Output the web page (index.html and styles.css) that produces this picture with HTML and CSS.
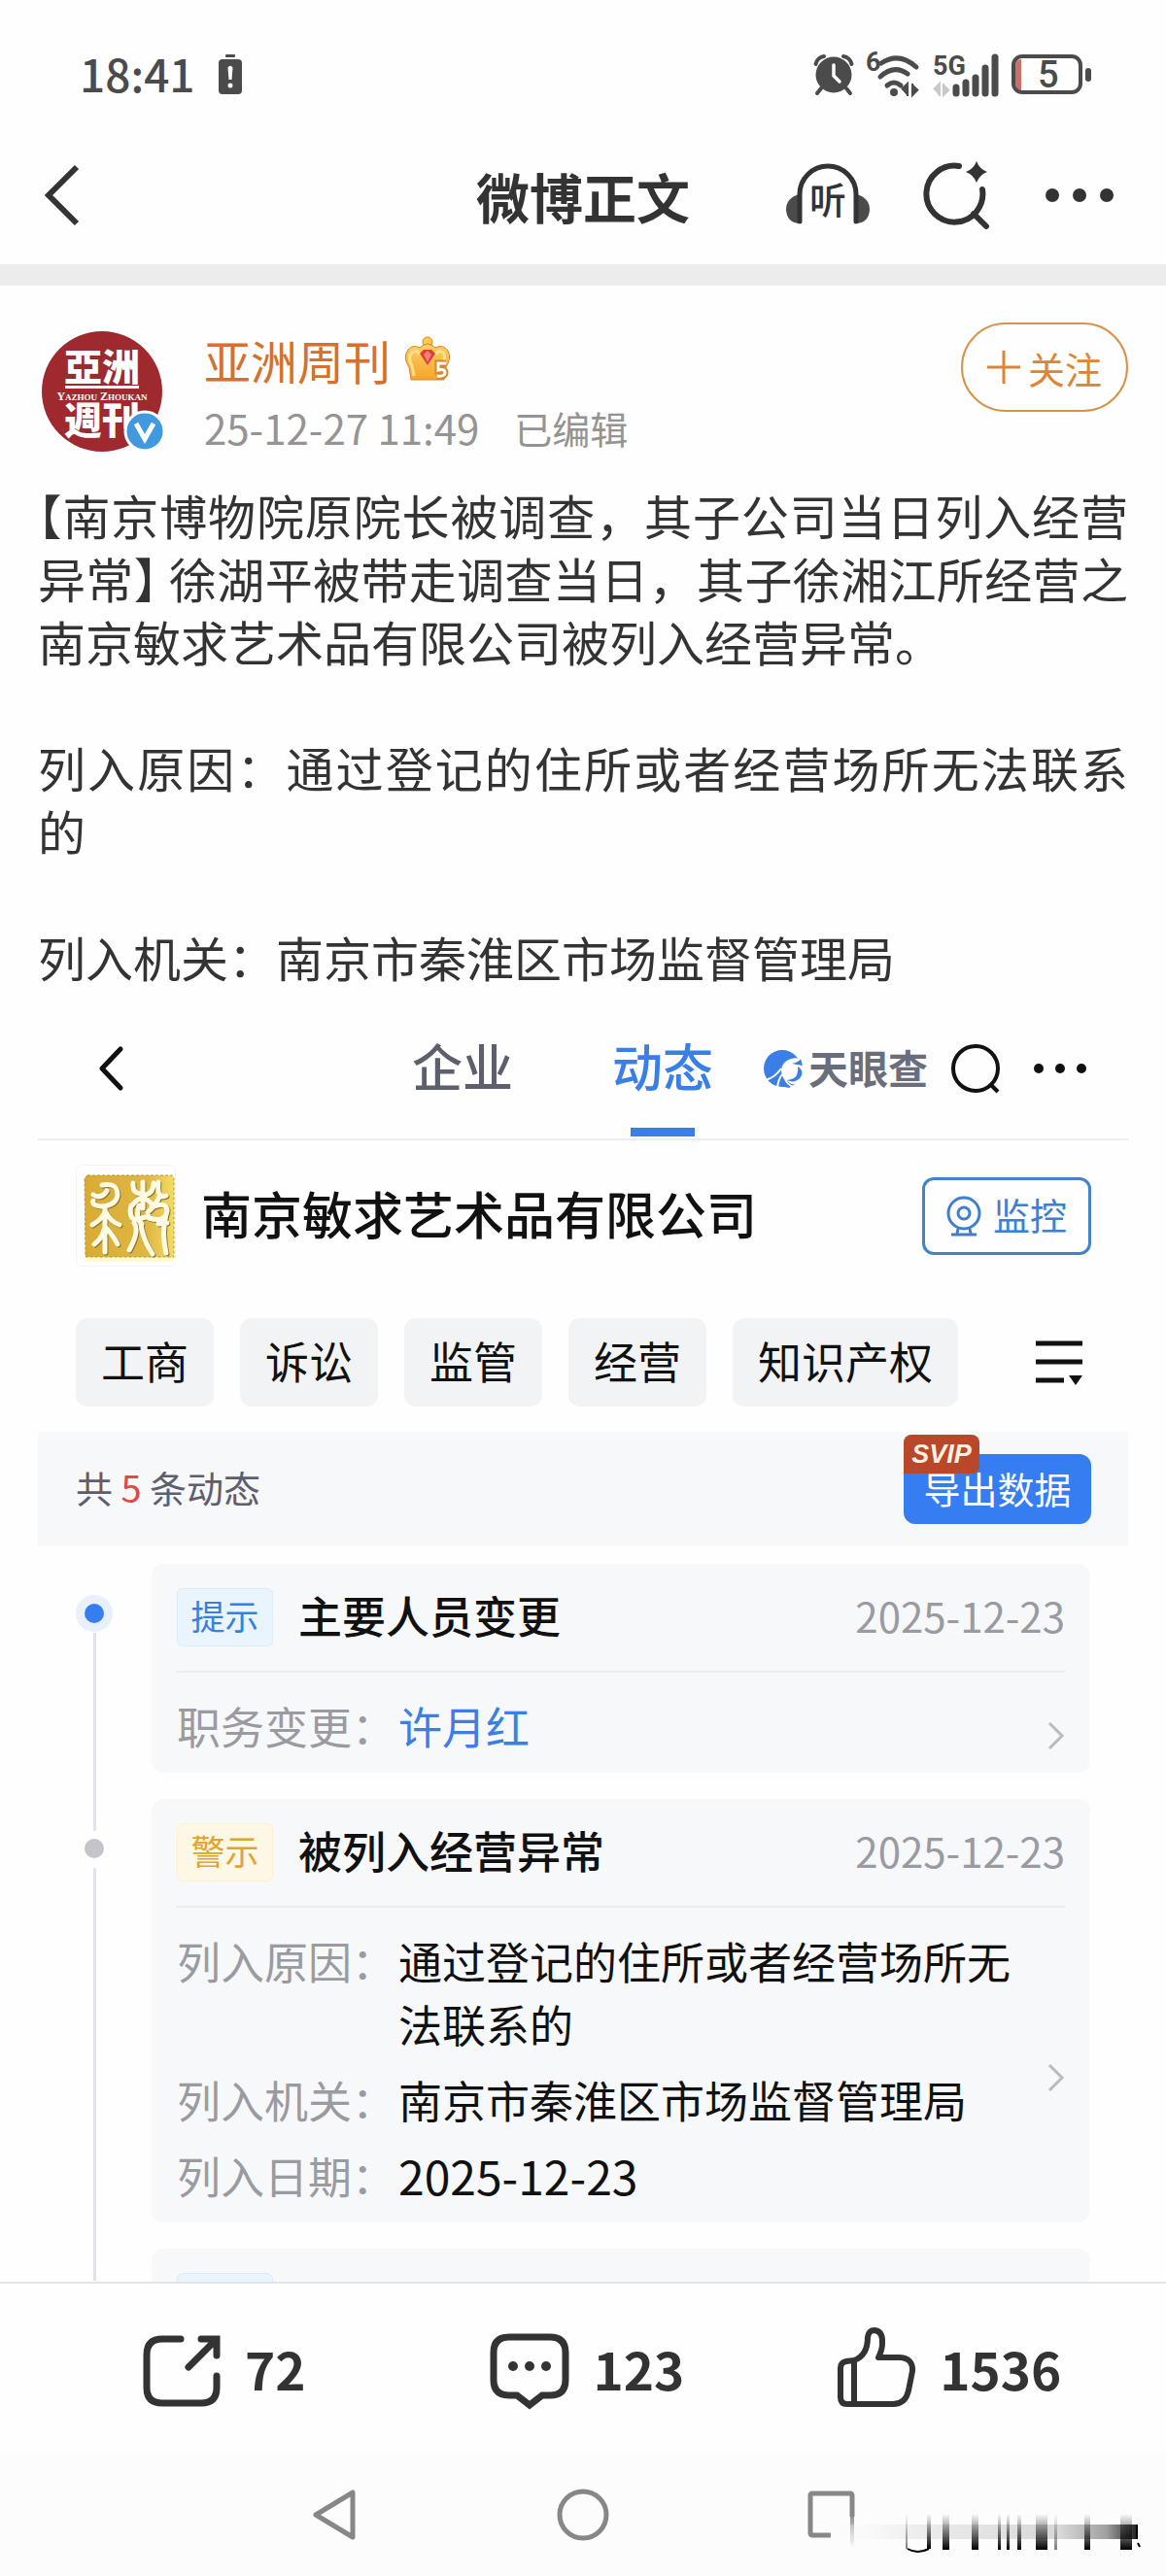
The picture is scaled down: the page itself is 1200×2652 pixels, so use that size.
FILE: index.html
```html
<!DOCTYPE html>
<html lang="zh-CN">
<head>
  <meta charset="UTF-8">
  <meta name="viewport" content="width=device-width, initial-scale=1.0">
  <title>微博正文</title>
  <link rel="stylesheet" href="styles.css">
</head>
<body>
  <!-- 系统状态栏 -->
  <div class="status-bar">
    <span class="time">18:41</span>
    <svg width="24" height="42" viewBox="0 0 24 42">
      <rect x="7" y="0" width="10" height="3" rx="1" fill="#4b4b4b"/>
      <rect x="0" y="5" width="24" height="36" rx="4" fill="#4b4b4b"/>
      <path d="M9.500 13.500Q12 10 14.500 13.500L13.500 26H10.500Z" fill="#fff"/>
      <circle cx="12" cy="32" r="2.500" fill="#fff"/>
    </svg>

    <div class="status-icons">
      <svg width="40" height="42" viewBox="0 0 40 42">
        <circle cx="20" cy="21" r="18.500" fill="#4b4b4b"/>
        <path d="M1.500 10A10 10 0 0 1 10 2M30 2A10 10 0 0 1 38.500 10M7 35l-4 5M33 35l4 5" fill="none" stroke="#4b4b4b" stroke-width="4" stroke-linecap="round"/>
        <path d="M20 11v11l6 6" fill="none" stroke="#fff" stroke-width="3.500" stroke-linecap="round"/>
      </svg>
      <svg width="56" height="46" viewBox="0 0 56 46">
        <text x="0" y="19" class="svg-small">6</text>
        <path d="M16 11Q34-1 52 15M15 25Q29 12 43 22M22 34Q29 28 36 34" fill="none" stroke="#4b4b4b" stroke-width="5" stroke-linecap="round"/>
        <circle cx="29" cy="41" r="4" fill="#4b4b4b"/>
        <path d="M37 38l6-6v13M54 38l-6 6V32" fill="#4b4b4b" stroke="#4b4b4b" stroke-width="2"/>
      </svg>
      <svg width="68" height="46" viewBox="0 0 68 46">
        <text x="0" y="23" class="svg-small">5G</text>
        <path d="M1 38l6-6v13M17 38l-6 6V32" fill="#c8c8c8" stroke="#c8c8c8" stroke-width="2"/>
        <path d="M24 36v6M34 31v11M44 26v16M54 16v26M64 5v37" stroke="#4b4b4b" stroke-width="7" stroke-linecap="round"/>
      </svg>
      <svg width="82" height="42" viewBox="0 0 82 42">
        <path d="M4 12q0-7 6-7v32q-6 0-6-7z" fill="#c9706a"/>
        <rect x="2" y="2" width="69" height="37" rx="9" fill="none" stroke="#4b4b4b" stroke-width="4"/>
        <rect x="76" y="14" width="6" height="14" rx="3" fill="#4b4b4b"/>
        <text x="27" y="34" class="svg-charge">5</text>
      </svg>
    </div>
  </div>

  <!-- 标题栏 -->
  <header class="app-header">
    <button class="icon-btn" type="button" aria-label="返回">
      <svg width="36" height="64" viewBox="0 0 36 64"><path d="M33 3L4 32l29 29" fill="none" stroke="#333" stroke-width="6"/></svg>
    </button>
    <h1>微博正文</h1>
    <div class="header-actions">
      <button class="icon-btn" type="button" aria-label="听">
        <svg width="88" height="70" viewBox="0 0 88 70">
          <path d="M14 34Q1 38 1 50Q2 63 14 64ZM74 34Q87 38 87 50Q86 63 74 64Z" fill="#4b4b4b"/>
          <path d="M15 62V34a29 29 0 0 1 58 0v28" fill="none" stroke="#333" stroke-width="5" stroke-linecap="round"/>
          <text x="25" y="54" class="svg-listen">听</text>
        </svg>
      </button>
      <button class="icon-btn" type="button" aria-label="搜索">
        <svg width="68" height="70" viewBox="0 0 68 70">
          <path d="M35 5A29 29 0 1 0 59 29M50 54l13 13" fill="none" stroke="#333" stroke-width="6" stroke-linecap="round"/>
          <path d="M53 0q3 8 11 11q-8 3-11 11q-3-8-11-11q8-3 11-11z" fill="#333"/>
        </svg>
      </button>
      <button class="icon-btn" type="button" aria-label="更多">
        <svg width="70" height="14" viewBox="0 0 70 14" fill="#333"><circle cx="7" cy="7" r="7"/><circle cx="35" cy="7" r="7"/><circle cx="63" cy="7" r="7"/></svg>
      </button>
    </div>
  </header>

  <!-- 微博内容 -->
  <main class="post">
    <div class="author">
      <a class="avatar" href="#" aria-label="亚洲周刊">
        <svg width="124" height="124" viewBox="0 0 124 124">
          <circle cx="62" cy="62" r="62" fill="#9e2a2f"/>
          <text x="62" y="51" class="logo-zh">亞洲</text>
          <rect x="24" y="56" width="76" height="3" fill="#fff"/>
          <text x="62" y="71" class="logo-en">Y<tspan class="sc">AZHOU</tspan> Z<tspan class="sc">HOUKAN</tspan></text>
          <text x="62" y="106" class="logo-zh">週刊</text>
        </svg>
        <svg class="verified" width="42" height="42" viewBox="0 0 42 42">
          <circle cx="21" cy="21" r="20" fill="#4299dd" stroke="#fff" stroke-width="3"/>
          <path d="M12 13l9 16 9-16" fill="none" stroke="#fff" stroke-width="5"/>
        </svg>
      </a>
      <div class="author-info">
        <div class="name-row">
          <a class="name" href="#">亚洲周刊</a>
          <svg width="48" height="48" viewBox="0 0 48 48">
            <defs>
              <linearGradient id="gold" x1="0" y1="0" x2="0" y2="1"><stop offset="0" stop-color="#fcd163"/><stop offset="1" stop-color="#f7a42a"/></linearGradient>
            </defs>
            <circle cx="24" cy="6" r="5" fill="#fcc955" stroke="#e08a20"/>
            <path d="M7 45L5 32Q-2 22 4 14Q9 8 16 12Q24 4 32 12Q40 8 45 15Q49 23 43 32L41 45Z" fill="url(#gold)" stroke="#d8862b"/>
            <path d="M10 41l-2-10Q3 22 8 17Q13 13 16 19M38 30Q44 22 40 17Q36 13 32 19" fill="none" stroke="#fde08c" stroke-width="3"/>
            <path d="M16 18l4-4h8l4 4-8 12z" fill="#dc4138"/>
            <path d="M20 19l4-4 4 4-4 8z" fill="#f08176"/>
            <path d="M43 28h-8v7q7-2 7 3q-1 4-8 3" fill="none" stroke="#d8862b" stroke-width="7"/>
            <path d="M43 28h-8v7q7-2 7 3q-1 4-8 3" fill="none" stroke="#fff" stroke-width="3"/>
          </svg>
        </div>
        <div class="meta"><time>25-12-27 11:49</time><span>已编辑</span></div>
      </div>
      <button class="follow" type="button">
        <svg width="34" height="34" viewBox="0 0 34 34"><path d="M0 17h34M17 0v34" stroke="#dd8534" stroke-width="3"/></svg>
        关注
      </button>
    </div>

    <div class="text">
      <p><span class="half">【</span>南京博物院原院长被调查，其子公司当日列入经营异常<span class="half">】</span> 徐湖平被带走调查当日，其子徐湘江所经营之南京敏求艺术品有限公司被列入经营异常。</p>
      <p>列入原因：通过登记的住所或者经营场所无法联系的</p>
      <p>列入机关：南京市秦淮区市场监督管理局</p>
    </div>

    <!-- 天眼查 -->
    <section class="company-page">
      <nav class="tabs">
        <button class="icon-btn" type="button" aria-label="返回">
          <svg width="26" height="46" viewBox="0 0 26 46"><path d="M22 3L3 23l19 20" fill="none" stroke="#111" stroke-width="5" stroke-linecap="round" stroke-linejoin="round"/></svg>
        </button>
        <a class="tab" href="#">企业</a>
        <a class="tab active" href="#">动态</a>
        <div class="brand">
          <svg width="40" height="40" viewBox="0 0 40 40">
            <circle cx="19" cy="20" r="19" fill="#3a7fe6"/>
            <path d="M40 11Q34 8 28 10Q19 13 18 21Q18 31 26 35Q30 40 38 36L42 22Z" fill="#fff"/>
            <path d="M29 15Q37 13 38 10L40 17Q34 16 29 15ZM35 18Q42 22 38 29Q32 36 24 32Q32 31 34 27Q36 22 35 18Z" fill="#3a7fe6"/>
            <path d="M24 32Q27 37 32 36L26 40L17 38Z" fill="#3a7fe6"/>
            <path d="M18 20Q12 29 2 32M19 26Q15 31 14 40M22 31Q24 36 30 39" fill="none" stroke="#fff" stroke-width="2"/>
          </svg>
          <span>天眼查</span>
        </div>
        <button class="icon-btn" type="button" aria-label="搜索">
          <svg width="50" height="50" viewBox="0 0 50 50"><circle cx="25" cy="25" r="23" fill="none" stroke="#111" stroke-width="4"/><path d="M40 41l8 8" stroke="#111" stroke-width="4"/></svg>
        </button>
        <button class="icon-btn" type="button" aria-label="更多">
          <svg width="54" height="10" viewBox="0 0 54 10" fill="#111"><circle cx="5" cy="5" r="5"/><circle cx="27" cy="5" r="5"/><circle cx="49" cy="5" r="5"/></svg>
        </button>
      </nav>

      <div class="company">
        <svg width="103" height="105" viewBox="0 0 103 105">
          <defs>
            <linearGradient id="seal" x1="0" y1="0" x2="1" y2="0"><stop offset="0" stop-color="#d9ab32"/><stop offset="0.700" stop-color="#dfb744"/><stop offset="1" stop-color="#f3dc62"/></linearGradient>
            <path id="strokes" d="M27 21Q43 18 43 31Q42 42 26 43Q16 42 18 37M18 31Q26 36 32 27M30 44V90M30 49Q26 57 17 62M31 49Q36 59 45 62M29 67Q27 76 19 82M31 65Q38 72 43 82M59 19Q58 29 66 30M69 18V45M80 19Q80 29 72 31M58 42Q69 27 80 43M57 42Q54 55 62 57L75 53M65 42Q61 56 68 61M60 60Q66 68 55 88M67 60Q68 75 79 92M85 18Q83 36 93 32M87 31Q82 43 74 49M78 44Q94 37 94 48Q92 60 75 55M93 51Q88 69 93 91M85 61L94 60"/>
          </defs>
          <rect x="0.500" y="0.500" width="102" height="104" rx="6" fill="#fff" stroke="#f3f3f3"/>
          <path d="M8 95h93v5H10z" fill="#fffbd0"/>
          <path d="M12 11H99l2 3V95H10L9 14Z" fill="url(#seal)" stroke="#b99735" stroke-dasharray="3 2"/>
          <g fill="none" stroke-linecap="round">
            <use href="#strokes" x="1" y="1" stroke="#8c7430" stroke-width="5"/>
            <use href="#strokes" stroke="#fffbe3" stroke-width="5"/>
          </g>
        </svg>
        <h2>南京敏求艺术品有限公司</h2>
        <button class="monitor" type="button">
          <svg width="36" height="42" viewBox="0 0 36 42" fill="none" stroke="#3f7fd0" stroke-width="3">
            <circle cx="18" cy="18" r="16"/><circle cx="18" cy="18" r="6"/><path d="M12 34l-1 5M24 34l1 5M5 40h26"/>
          </svg>
          <span>监控</span>
        </button>
      </div>

      <div class="chips">
        <button type="button">工商</button>
        <button type="button">诉讼</button>
        <button type="button">监管</button>
        <button type="button">经营</button>
        <button type="button">知识产权</button>
        <button class="filter" type="button" aria-label="筛选">
          <svg width="48" height="46" viewBox="0 0 48 46"><path d="M0 3h48M0 22h48M0 41h29" stroke="#111" stroke-width="5"/><path d="M34 36h14l-7 10z" fill="#111"/></svg>
        </button>
      </div>

      <div class="summary">
        <span class="count">共 <b>5</b> 条动态</span>
        <button class="export" type="button">导出数据<span class="svip">SVIP</span></button>
      </div>

      <ol class="timeline">
        <li class="current">
          <article class="card">
            <header><span class="tag">提示</span><h3>主要人员变更</h3><time>2025-12-23</time></header>
            <div class="card-body">
              <dl>
                <div><dt>职务变更：</dt><dd><a href="#">许月红</a></dd></div>
              </dl>
              <svg class="chevron" width="18" height="30" viewBox="0 0 18 30"><path d="M2 2l13 13L2 28" fill="none" stroke="#b6bcc2" stroke-width="3"/></svg>
            </div>
          </article>
        </li>
        <li>
          <article class="card">
            <header><span class="tag warn">警示</span><h3>被列入经营异常</h3><time>2025-12-23</time></header>
            <div class="card-body">
              <dl>
                <div><dt>列入原因：</dt><dd>通过登记的住所或者经营场所无法联系的</dd></div>
                <div><dt>列入机关：</dt><dd>南京市秦淮区市场监督管理局</dd></div>
                <div><dt>列入日期：</dt><dd class="date">2025-12-23</dd></div>
              </dl>
              <svg class="chevron" width="18" height="30" viewBox="0 0 18 30"><path d="M2 2l13 13L2 28" fill="none" stroke="#b6bcc2" stroke-width="3"/></svg>
            </div>
          </article>
        </li>
        <li>
          <article class="card">
            <header><span class="tag"></span></header>
          </article>
        </li>
      </ol>
    </section>
  </main>

  <!-- 底部操作 -->
  <footer class="actions">
    <button type="button" aria-label="转发 72">
      <svg width="80" height="74" viewBox="0 0 80 74" fill="none" stroke="#333" stroke-width="7" stroke-linecap="round">
        <path d="M39 4H20Q4 4 4 20V54Q4 70 20 70H60Q76 70 76 54V42"/><path d="M60 4H76V21M74 6L47 33"/>
      </svg>
      <span>72</span>
    </button>
    <button type="button" aria-label="评论 123">
      <svg width="82" height="78" viewBox="0 0 82 78">
        <path d="M20 4H62Q78 4 78 20V48Q78 64 62 64H54L41 74L28 64H20Q4 64 4 48V20Q4 4 20 4Z" fill="none" stroke="#333" stroke-width="7"/>
        <g fill="#333"><circle cx="24" cy="34" r="5"/><circle cx="41" cy="34" r="5"/><circle cx="58" cy="34" r="5"/></g>
      </svg>
      <span>123</span>
    </button>
    <button type="button" aria-label="点赞 1536">
      <svg width="80" height="90" viewBox="0 0 80 90" fill="none" stroke="#333" stroke-width="6" stroke-linejoin="round">
        <path d="M17 34Q31 29 31 10Q32 3 38 3Q47 4 46 17Q46 23 42 31H64Q78 32 77 45L73 65Q70 79 57 79H10Q3 79 3 72V42Q3 36 9 35ZM17 34V79"/>
      </svg>
      <span>1536</span>
    </button>
  </footer>

  <!-- 系统导航 -->
  <nav class="system-nav">
    <button class="icon-btn" type="button" aria-label="后退"><svg width="46" height="54" viewBox="0 0 46 54"><path d="M42 4V50L4 27Z" fill="none" stroke="#878787" stroke-width="5" stroke-linejoin="round"/></svg></button>
    <button class="icon-btn" type="button" aria-label="主页"><svg width="54" height="54" viewBox="0 0 54 54"><circle cx="27" cy="27" r="24" fill="none" stroke="#878787" stroke-width="5"/></svg></button>
    <button class="icon-btn" type="button" aria-label="最近"><svg width="48" height="48" viewBox="0 0 48 48"><rect x="2" y="2" width="43" height="43" rx="2" fill="none" stroke="#878787" stroke-width="5"/></svg></button>
    <svg class="smudge" width="330" height="44" viewBox="0 0 330 44" aria-hidden="true">
      <defs>
        <linearGradient id="band" x1="0" y1="0" x2="1" y2="0"><stop offset="0" stop-color="#fcfcfc" stop-opacity="0"/><stop offset="0.300" stop-color="#ececec"/><stop offset="0.750" stop-color="#d8d8d8"/><stop offset="0.900" stop-color="#a0a0a0"/><stop offset="1" stop-color="#222"/></linearGradient>
        <linearGradient id="ink" x1="0" y1="0" x2="0" y2="1"><stop offset="0" stop-color="#111" stop-opacity="0"/><stop offset="1" stop-color="#000"/></linearGradient>
        <linearGradient id="fade" x1="0" y1="0" x2="0" y2="1"><stop offset="0" stop-color="#878787"/><stop offset="1" stop-color="#878787" stop-opacity="0"/></linearGradient>
      </defs>
      <rect x="5" y="3" width="80" height="26" fill="#fcfcfc"/>
      <rect x="25" y="0" width="4" height="34" fill="url(#fade)"/>
      <rect x="0" y="11" width="321" height="15" fill="url(#band)"/>
      <g fill="url(#ink)">
        <rect x="82" y="0" width="2" height="36" opacity="0.500"/>
        <rect x="104" y="0" width="4" height="36"/>
        <rect x="120" y="0" width="7" height="37"/>
        <rect x="150" y="0" width="7" height="37"/>
        <rect x="177" y="0" width="3" height="37"/>
        <rect x="186" y="0" width="3" height="37"/>
        <rect x="197" y="0" width="4" height="37"/>
        <rect x="216" y="0" width="12" height="37"/>
        <rect x="235" y="0" width="3" height="37" opacity="0.500"/>
        <rect x="266" y="0" width="6" height="37"/>
        <rect x="303" y="0" width="12" height="37"/>
      </g>
      <path d="M84 36Q94 42 106 36M321 30l2 4" fill="none" stroke="#000" stroke-width="2"/>
      <path d="M320 11v15" stroke="#000" stroke-width="2"/>
    </svg>
  </nav>
</body>
</html>
```
FILE: styles.css
```css
/* 通用 */
* {
  box-sizing: border-box;
}

body {
  display: flex;
  flex-direction: column;
  height: 100vh;
  margin: 0;
  background-color: #fefefe;
  color: #333;
  font-family: "Noto Sans CJK SC", sans-serif;
}

h1, h2, h3, p, dl, dd, ol {
  margin: 0;
  padding: 0;
}

a {
  color: inherit;
  text-decoration: none;
}

svg {
  display: block;
  flex: none;
  overflow: visible;
}

button {
  padding: 0;
  border: none;
  background: none;
  color: inherit;
  font-family: inherit;
  white-space: nowrap;
  cursor: pointer;
}

/* 状态栏 */
.status-bar {
  display: flex;
  flex: none;
  align-items: center;
  gap: 24px;
  height: 150px;
  padding: 4px 77px 0 82px;
  color: #4b4b4b;
}

.time {
  padding-bottom: 4px;
  font-size: 46px;
  font-weight: 500;
  line-height: 60px;
}

.status-icons {
  display: flex;
  gap: 13px;
  margin-left: auto;
  align-items: center;
}

.svg-small {
  font-family: "Liberation Sans Narrow", Roboto, sans-serif;
  font-size: 27px;
  font-weight: 700;
  fill: #4b4b4b;
}

.svg-charge {
  font-family: Roboto, sans-serif;
  font-size: 38px;
  font-weight: 500;
  fill: #4b4b4b;
}

.svg-listen {
  font-size: 38px;
  font-weight: 500;
  fill: #333;
}

/* 标题栏 */
.app-header {
  display: grid;
  flex: none;
  grid-template-columns: 1fr auto 1fr;
  align-items: center;
  height: 144px;
  padding: 0 46px 20px;
  border-bottom: 22px solid #ececec;
}

.app-header > .icon-btn {
  justify-self: start;
}

.app-header h1 {
  font-size: 55px;
  line-height: 64px;
}

.header-actions {
  display: flex;
  align-items: center;
  justify-content: flex-end;
  gap: 56px;
  padding-right: 8px;
}

/* 微博 */
.post {
  flex: 1;
  min-height: 0;
  padding: 0 39px;
  overflow: hidden;
}

.author {
  display: flex;
  align-items: flex-start;
  padding: 38px 0 24px 4px;
}

.avatar {
  position: relative;
  margin: 9px 43px 8px 0;
}

.verified {
  position: absolute;
  right: -3px;
  bottom: 0;
}

.logo-zh {
  font-size: 39px;
  font-weight: 900;
  fill: #fff;
  text-anchor: middle;
}

.logo-en {
  font-family: "Liberation Serif", serif;
  font-size: 12px;
  font-weight: 700;
  fill: #fff;
  text-anchor: middle;
}

.logo-en .sc {
  font-size: 9px;
}

.author-info {
  flex: 1;
}

.name-row {
  display: flex;
  align-items: center;
  gap: 14px;
  height: 76px;
}

.name {
  color: #d4712f;
  font-size: 48px;
  line-height: 64px;
}

.meta {
  display: flex;
  align-items: center;
  gap: 36px;
  color: #949494;
  font-size: 39px;
  line-height: 64px;
}

.meta time,
.card time {
  font-size: 42px;
}

.follow {
  display: flex;
  align-items: center;
  justify-content: center;
  gap: 8px;
  width: 172px;
  height: 92px;
  border: 2px solid #d8934a;
  border-radius: 46px;
  color: #dd8534;
  font-size: 38px;
}

.text {
  padding-bottom: 3px;
  font-size: 49px;
  line-height: 65px;
  text-align: justify;
}

.text p + p {
  margin-top: 65px;
}

/* 半宽括号 */
.half {
  font-feature-settings: "halt";
}

/* 企业页 */
.tabs {
  display: flex;
  align-items: center;
  height: 154px;
  padding: 8px 43px 0 63px;
  border-bottom: 2px solid #eeeef0;
}

.tab {
  margin-right: 102px;
  padding-bottom: 6px;
  color: #5d606c;
  font-size: 52px;
  font-weight: 500;
  line-height: 138px;
}

.tab:nth-of-type(1) {
  margin-left: auto;
}

.tab.active {
  position: relative;
  margin-right: 52px;
  color: #3a7fe6;
}

.tab.active::after {
  content: "";
  position: absolute;
  left: 50%;
  bottom: 2px;
  width: 66px;
  height: 9px;
  margin-left: -33px;
  background-color: #3a7fe6;
}

.brand {
  display: flex;
  align-items: center;
  gap: 6px;
  margin-right: 24px;
  color: #6a6e7c;
  font-size: 41px;
  font-weight: 700;
}

.brand span {
  padding-bottom: 4px;
}

.tabs .icon-btn:last-child {
  margin-left: 35px;
}

.company {
  display: flex;
  align-items: center;
  padding: 25px 38px 53px 39px;
  color: #111;
}

.company h2 {
  flex: 1;
  margin-left: 26px;
  padding-bottom: 6px;
  font-size: 52px;
  font-weight: 500;
  line-height: 64px;
}

.monitor {
  display: flex;
  align-items: center;
  justify-content: center;
  gap: 12px;
  width: 174px;
  height: 80px;
  border: 3px solid #4581c8;
  border-radius: 12px;
  color: #3f7fd0;
  font-size: 38px;
}

.monitor span {
  padding-bottom: 4px;
}

.chips {
  display: flex;
  align-items: center;
  gap: 27px;
  padding: 0 47px 26px 39px;
}

.chips button {
  height: 91px;
  padding: 0 26px 4px;
  border-radius: 12px;
  background-color: #f2f3f5;
  color: #111;
  font-size: 45px;
}

.chips .filter {
  margin-left: auto;
  padding: 0;
  background: none;
}

.summary {
  display: flex;
  align-items: center;
  justify-content: space-between;
  height: 118px;
  padding: 0 38px 0 39px;
  background-color: #f7f8fa;
  color: #5d606c;
  font-size: 38px;
}

.count {
  padding-bottom: 6px;
}

.summary b {
  color: #dc4b45;
  font-weight: 400;
}

.export {
  position: relative;
  width: 193px;
  height: 72px;
  padding-bottom: 4px;
  border-radius: 12px;
  background-color: #367df2;
  color: #fff;
  font-size: 38px;
}

.svip {
  position: absolute;
  top: -20px;
  left: 0;
  width: 78px;
  height: 40px;
  border-radius: 8px 8px 8px 0;
  background-color: #b9472a;
  color: #fff0e0;
  font-family: "Liberation Sans", sans-serif;
  font-size: 27px;
  font-style: italic;
  font-weight: 700;
  line-height: 40px;
}

/* 时间线 */
.timeline {
  padding: 18px 39px 0 117px;
  list-style: none;
}

.timeline li {
  position: relative;
  padding-bottom: 27px;
}

.timeline li::before {
  content: "";
  position: absolute;
  top: 71px;
  bottom: -33px;
  left: -60px;
  width: 3px;
  background-color: #e2e2e8;
}

.timeline li::after {
  content: "";
  position: absolute;
  top: 41px;
  left: -69px;
  width: 20px;
  height: 20px;
  border-radius: 50%;
  background-color: #c3c5ca;
}

.timeline .current::after {
  background-color: #367df2;
  box-shadow: 0 0 0 9px #e8f1fb;
}

.card {
  padding: 0 26px;
  border-radius: 12px;
  background-color: #f7f8fa;
  color: #111;
}

.card header {
  display: flex;
  align-items: center;
  height: 112px;
  border-bottom: 2px solid #ebecee;
}

.tag {
  width: 99px;
  height: 60px;
  border: 1px solid #dcebf8;
  border-radius: 6px;
  background-color: #e9f4fd;
  color: #3a7fd8;
  font-size: 35px;
  line-height: 54px;
  text-align: center;
}

.tag.warn {
  border-color: #fbf0d2;
  background-color: #fdf7e6;
  color: #e0a530;
}

.card h3 {
  flex: 1;
  margin-left: 26px;
  padding-bottom: 6px;
  font-size: 45px;
  font-weight: 500;
}

.card time {
  padding-bottom: 6px;
  color: #9a9ba1;
}

.card-body {
  display: flex;
  align-items: center;
  padding: 22px 0 16px;
}

.card dl {
  display: flex;
  flex: 1;
  flex-direction: column;
  gap: 13px;
  font-size: 45px;
  line-height: 65px;
}

.card dl div {
  display: flex;
}

.card dt {
  flex: none;
  width: 228px;
  color: #9a9ba1;
}

.card dd a {
  color: #3a7fe6;
}

.card .date {
  font-size: 48px;
}

.chevron {
  margin: 20px 0 0 32px;
}

/* 底部操作栏 */
.actions {
  display: grid;
  flex: none;
  grid-template-columns: repeat(3, 1fr);
  height: 176px;
  padding: 6px 36px 0 44px;
  border-top: 2px solid #e2e4e8;
}

.actions button {
  display: flex;
  align-items: center;
  justify-content: center;
  gap: 25px;
  font-size: 53px;
  font-weight: 700;
}

.actions span {
  padding-bottom: 7px;
}

/* 系统导航 */
.system-nav {
  position: relative;
  display: grid;
  flex: none;
  grid-template-columns: repeat(3, 1fr);
  justify-items: center;
  align-items: center;
  height: 127px;
  padding: 0 216px;
  background-color: #fcfcfc;
}

.smudge {
  position: absolute;
  right: 20px;
  bottom: 20px;
}
```
